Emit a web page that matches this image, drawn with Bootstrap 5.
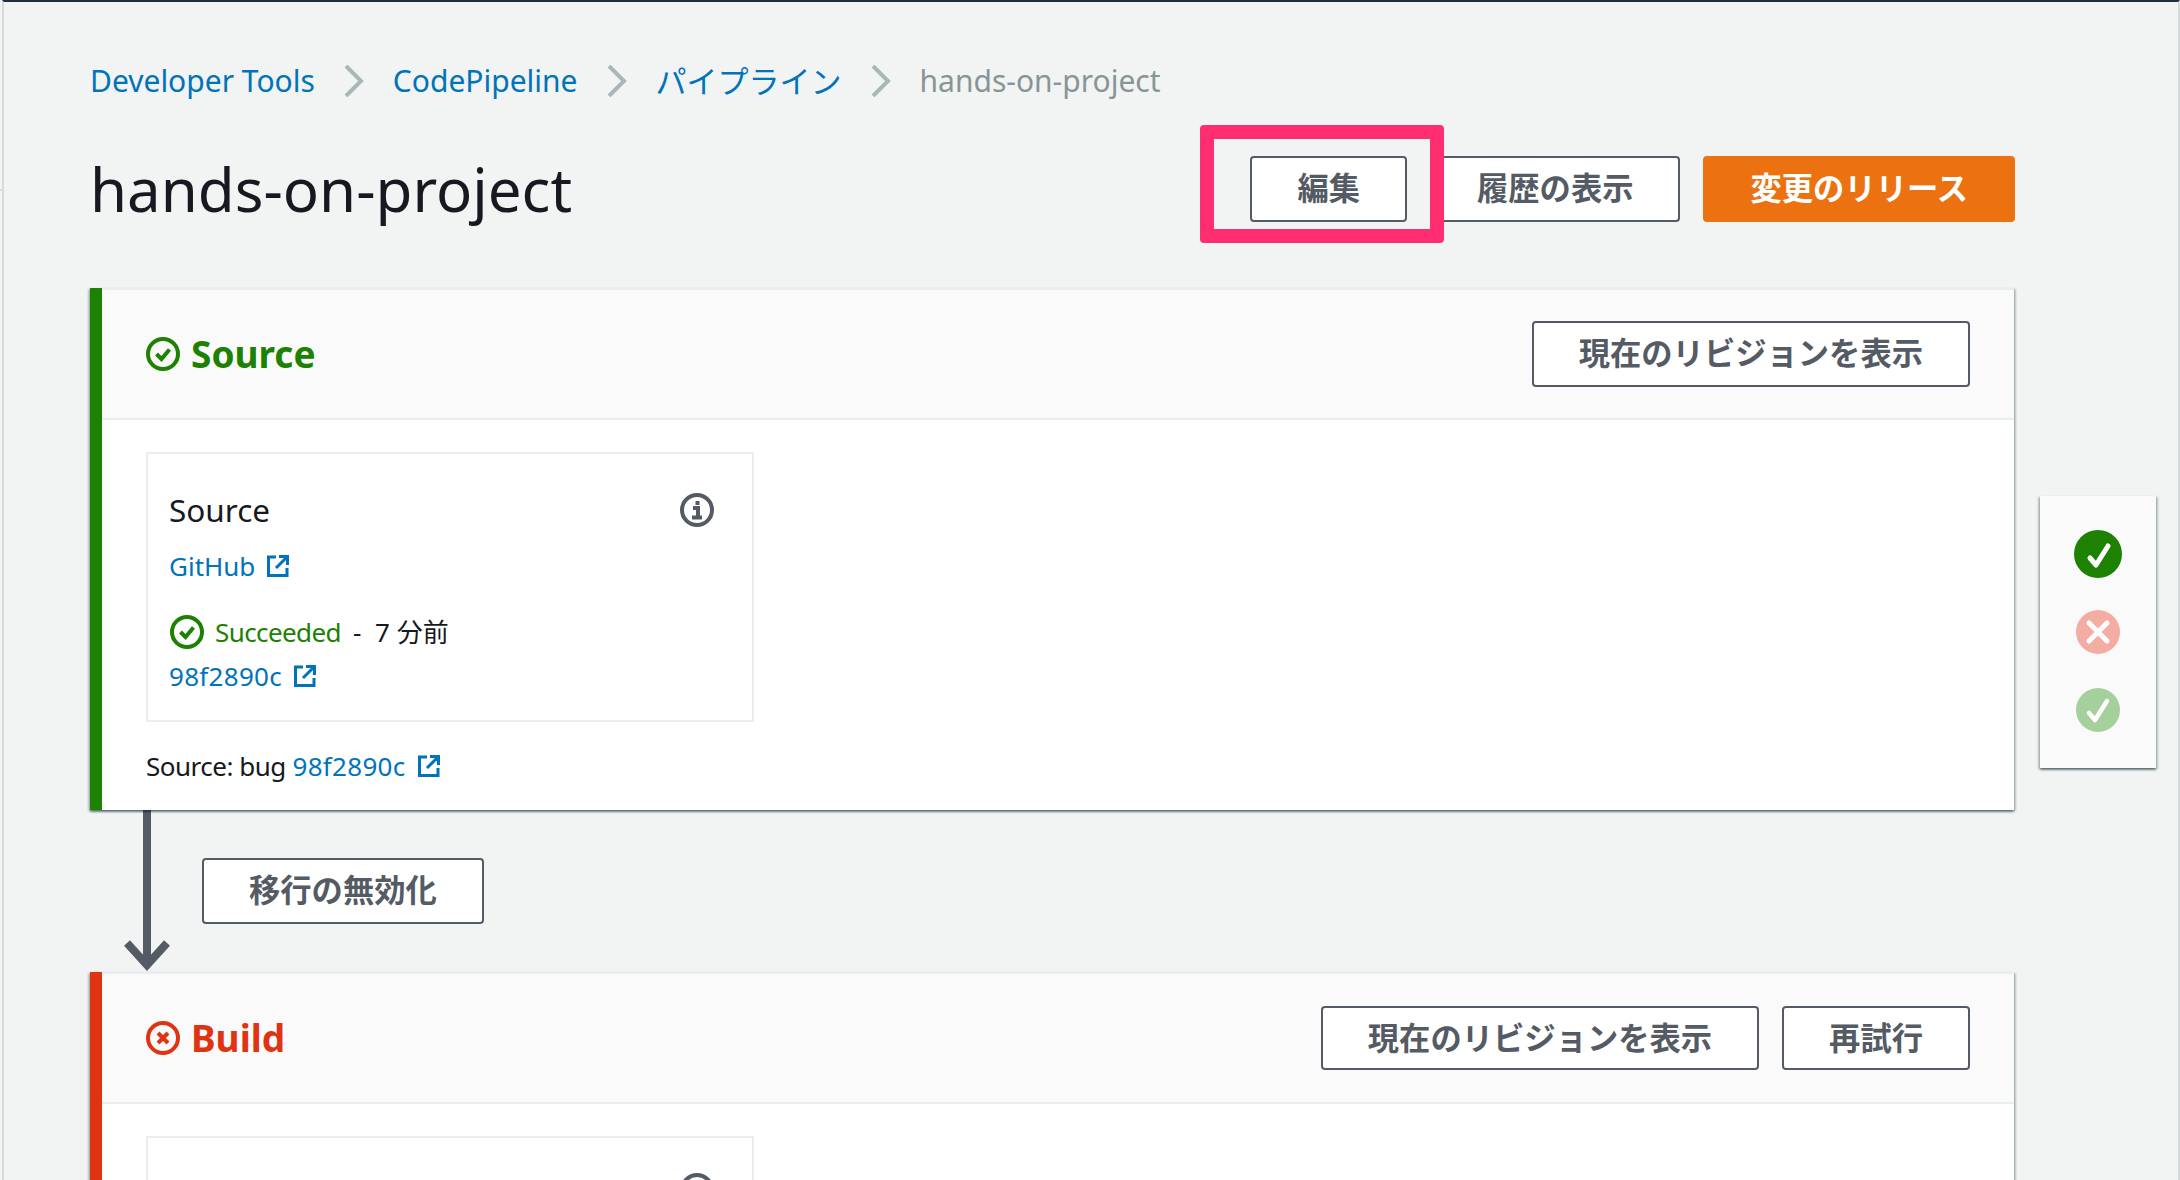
<!DOCTYPE html>
<html lang="ja">
<head>
    <meta charset="UTF-8">
    <meta name="viewport" content="width=device-width, initial-scale=1">
    <title>hands-on-project</title>
    <link rel="stylesheet" href="https://cdn.jsdelivr.net/npm/bootstrap@5.3.0/dist/css/bootstrap.min.css">
    <style>
        html, body { height: 1180px; overflow: hidden; }
        body {
            background: #f2f3f3 linear-gradient(#d5dbdb, #d5dbdb) 0 189px / 2px 2px no-repeat;
            color: #16191f;
            font-family: "Noto Sans", "Noto Sans CJK JP", sans-serif;
            font-size: 26px;
            line-height: 40px;
        }
        a { color: #0073bb; text-decoration: none; }
        .page-wrap {
            height: 1180px;
            overflow: hidden;
            margin-left: 2px;
            border-top: 2px solid #232f3e;
            border-left: 2px solid #d5dbdb;
            border-right: 2px solid #d5dbdb;
            padding: 59px 0 0 86px;
        }
        .crumbs { gap: 29px; margin: 0; height: 40px; font-size: 30px; --bs-breadcrumb-margin-bottom: 0; }
        .crumbs .breadcrumb-item { padding: 0; display: flex; align-items: center; gap: 29px; }
        .crumbs .breadcrumb-item::before { display: none; }
        .crumbs .breadcrumb-item.active { color: #879596; }
        .crumb-ja { font-size: 31px; }
        .chev { width: 20px; height: 32px; }
        .head-row { width: 1925px; height: 187px; padding-top: 55px; }
        .head-inner { height: 66px; }
        .page-title { font-size: 60px; line-height: 72px; font-weight: 400; margin: 0; }
        .btn-gap { gap: 23px; }
        .aws-btn {
            --bs-btn-padding-x: 45px;
            --bs-btn-padding-y: 0;
            --bs-btn-font-size: 31.300px;
            --bs-btn-font-weight: 700;
            --bs-btn-line-height: 60px;
            --bs-btn-color: #545b64;
            --bs-btn-bg: #fff;
            --bs-btn-border-color: #545b64;
            --bs-btn-border-width: 2px;
            --bs-btn-border-radius: 4px;
            --bs-btn-hover-color: #16191f;
            --bs-btn-hover-bg: #fafafa;
            --bs-btn-hover-border-color: #16191f;
            height: 66px;
            padding-bottom: 2px;
            white-space: nowrap;
        }
        .aws-btn-primary {
            --bs-btn-color: #fff;
            --bs-btn-bg: #ec7211;
            --bs-btn-border-color: #ec7211;
            --bs-btn-hover-color: #fff;
            --bs-btn-hover-bg: #eb5f07;
            --bs-btn-hover-border-color: #eb5f07;
        }
        .btn-short { height: 64px; }
        .highlight-wrap { position: relative; }
        .highlight-box {
            position: absolute;
            left: -50px;
            top: -31px;
            width: 244px;
            height: 118px;
            border: 14px solid #ff2e70;
            border-radius: 4px;
            pointer-events: none;
            z-index: 2;
        }
        .stage-list { width: 1924px; }
        .stage-card {
            border: 0;
            border-left: 12px solid #1d8102;
            border-radius: 0;
            box-shadow: 0 2px 2px 0 rgba(0, 28, 36, .45), 2px 1px 2px 0 rgba(0, 28, 36, .2), -2px 1px 2px 0 rgba(0, 28, 36, .2);
        }
        .stage-failed { border-left-color: #df3312; }
        .stage-head {
            background: #fafafa;
            height: 132px;
            padding: 0 44px 0 44px;
            border-top: 2px solid #eaeded;
            border-bottom: 2px solid #eaeded;
            border-radius: 0 !important;
        }
        .stage-title { font-size: 37px; line-height: 44px; font-weight: 700; margin: 0; gap: 11px; }
        .title-ok { color: #1d8102; }
        .title-bad { color: #df3312; }
        .stage-main { padding: 32px 44px 0; height: 390px; }
        .action-box {
            width: 608px;
            height: 270px;
            border: 2px solid #eaeded;
            padding: 34px 22px 0 21px;
        }
        .action-name { font-size: 31.500px; line-height: 44px; }
        .ext-icon { width: 22px; height: 22px; margin-left: 12px; vertical-align: -1px; }
        .row-link { margin-top: 14px; }
        .row-status { margin-top: 26px; gap: 11px; padding-left: 1px; }
        .row-commit { margin-top: 4px; letter-spacing: .3px; }
        .status-ok { color: #1d8102; letter-spacing: -.6px; }
        .status-when { margin-left: 1px; }
        .status-dash { margin-right: 7px; }
        .source-note { margin-top: 24px; height: 40px; }
        .source-note a { letter-spacing: .3px; }
        .note-text { letter-spacing: -.5px; }
        .transition-row { height: 162px; }
        .flow-arrow { width: 46px; height: 162px; margin-left: 34px; }
        .transition-row .btn { margin-left: 32px; margin-top: 48px; align-self: flex-start; }
        .mini-map {
            width: 116px;
            height: 272px;
            margin: 395px 0 0 25px;
            background: #fafafa;
            box-shadow: 0 2px 2px 0 rgba(0, 28, 36, .45), 2px 1px 2px 0 rgba(0, 28, 36, .2), -2px 1px 2px 0 rgba(0, 28, 36, .2);
            padding-top: 34px;
            gap: 30px;
        }
    </style>
</head>
<body>
    <div class="page-wrap">
        <ol class="breadcrumb crumbs align-items-center">
            <li class="breadcrumb-item"><a href="#">Developer Tools</a>
                <svg class="chev" viewBox="0 0 20 32" fill="none" stroke="#aab7b8" stroke-width="4"><path d="M2 1l15 15L2 31"/></svg></li>
            <li class="breadcrumb-item"><a href="#">CodePipeline</a>
                <svg class="chev" viewBox="0 0 20 32" fill="none" stroke="#aab7b8" stroke-width="4"><path d="M2 1l15 15L2 31"/></svg></li>
            <li class="breadcrumb-item"><a class="crumb-ja" href="#">パイプライン</a>
                <svg class="chev" viewBox="0 0 20 32" fill="none" stroke="#aab7b8" stroke-width="4"><path d="M2 1l15 15L2 31"/></svg></li>
            <li class="breadcrumb-item active">hands-on-project</li>
        </ol>

        <div class="d-flex">
            <div>
                <div class="head-row">
                    <div class="head-inner d-flex justify-content-between align-items-center">
                        <h1 class="page-title">hands-on-project</h1>
                        <div class="d-flex btn-gap">
                            <span class="highlight-wrap">
                                <button class="btn aws-btn">編集</button>
                                <span class="highlight-box"></span>
                            </span>
                            <button class="btn aws-btn">履歴の表示</button>
                            <button class="btn aws-btn aws-btn-primary">変更のリリース</button>
                        </div>
                    </div>
                </div>

                <div class="stage-list">
                    <div class="card stage-card">
                        <div class="card-header stage-head d-flex justify-content-between align-items-center">
                            <h2 class="stage-title title-ok d-flex align-items-center">
                                <svg width="34" height="34" viewBox="0 0 34 34" fill="none" stroke="#1d8102" stroke-width="4"><circle cx="17" cy="17" r="15"/><path d="M10.500 17l5 5 8-9.500"/></svg>
                                Source
                            </h2>
                            <button class="btn aws-btn">現在のリビジョンを表示</button>
                        </div>
                        <div class="card-body stage-main">
                            <div class="action-box">
                                <div class="d-flex justify-content-between align-items-center">
                                    <span class="action-name">Source</span>
                                    <svg class="me-3" width="34" height="36" viewBox="0 0 34 36" fill="none" stroke="#545b64" stroke-width="4"><circle cx="17" cy="18" r="15"/><path d="M13 16h5v9M12 25.500h10M17.500 9v4"/></svg>
                                </div>
                                <div class="row-link"><a href="#">GitHub<svg class="ext-icon" viewBox="0 0 22 22" fill="none" stroke="#0073bb" stroke-width="3"><path d="M9 2H1.500v18.500H20V13M9 13L19 3M12 1.500h8.500V10"/></svg></a></div>
                                <div class="row-status d-flex align-items-center">
                                    <svg width="34" height="34" viewBox="0 0 34 34" fill="none" stroke="#1d8102" stroke-width="4"><circle cx="17" cy="17" r="15"/><path d="M10.500 17l5 5 8-9.500"/></svg>
                                    <span class="status-ok">Succeeded</span><span class="status-when"><span class="status-dash">-</span> 7 分前</span>
                                </div>
                                <div class="row-commit"><a href="#">98f2890c<svg class="ext-icon" viewBox="0 0 22 22" fill="none" stroke="#0073bb" stroke-width="3"><path d="M9 2H1.500v18.500H20V13M9 13L19 3M12 1.500h8.500V10"/></svg></a></div>
                            </div>
                            <div class="source-note"><span class="note-text">Source: bug</span> <a href="#">98f2890c<svg class="ext-icon" viewBox="0 0 22 22" fill="none" stroke="#0073bb" stroke-width="3"><path d="M9 2H1.500v18.500H20V13M9 13L19 3M12 1.500h8.500V10"/></svg></a></div>
                        </div>
                    </div>

                    <div class="transition-row d-flex">
                        <svg class="flow-arrow" viewBox="0 0 46 162" fill="none" stroke="#545b64" stroke-width="8"><path d="M23 0v156M3 133l20 22 20-22"/></svg>
                        <button class="btn aws-btn">移行の無効化</button>
                    </div>

                    <div class="card stage-card stage-failed">
                        <div class="card-header stage-head d-flex justify-content-between align-items-center">
                            <h2 class="stage-title title-bad d-flex align-items-center">
                                <svg width="34" height="34" viewBox="0 0 34 34" fill="none" stroke="#df3312" stroke-width="4"><circle cx="17" cy="17" r="15"/><path d="M12 12l10 10M22 12L12 22"/></svg>
                                Build
                            </h2>
                            <div class="d-flex btn-gap">
                                <button class="btn aws-btn btn-short">現在のリビジョンを表示</button>
                                <button class="btn aws-btn btn-short">再試行</button>
                            </div>
                        </div>
                        <div class="card-body stage-main">
                            <div class="action-box">
                                <div class="d-flex justify-content-end align-items-center">
                                    <svg class="me-3" width="34" height="36" viewBox="0 0 34 36" fill="none" stroke="#545b64" stroke-width="4"><circle cx="17" cy="18" r="15"/><path d="M13 16h5v9M12 25.500h10M17.500 9v4"/></svg>
                                </div>
                            </div>
                        </div>
                    </div>
                </div>
            </div>

            <div class="mini-map d-flex flex-column align-items-center">
                <svg width="48" height="48" viewBox="0 0 48 48" fill="none" stroke="#fff" stroke-width="5" stroke-linecap="round" stroke-linejoin="round"><circle cx="24" cy="24" r="24" fill="#1d8102" stroke="none"/><path d="M16 28l6 7 12-19"/></svg>
                <svg width="48" height="48" viewBox="0 0 48 48" fill="none" stroke="#fff" stroke-width="5" stroke-linecap="round"><circle cx="24" cy="24" r="22" fill="#f4ada3" stroke="none"/><path d="M15 15l18 18M33 15L15 33"/></svg>
                <svg width="48" height="48" viewBox="0 0 48 48" fill="none" stroke="#fff" stroke-width="4.500" stroke-linecap="round" stroke-linejoin="round"><circle cx="24" cy="24" r="22" fill="#a5d09c" stroke="none"/><path d="M15 27l6 7 12-19"/></svg>
            </div>
        </div>
    </div>
    <script src="https://cdn.jsdelivr.net/npm/bootstrap@5.3.0/dist/js/bootstrap.bundle.min.js"></script>
</body>
</html>
